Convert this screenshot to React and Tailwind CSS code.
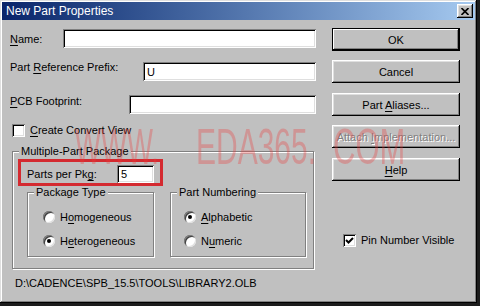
import React from 'react';

const FONT = { fontFamily: '"Liberation Sans", Arial, sans-serif' };

const RAISED = 'shadow-[inset_-1px_-1px_0_#000,inset_1px_1px_0_#fff,inset_-2px_-2px_0_#808080,inset_2px_2px_0_#dfdfdf]';
const SUNKEN = 'shadow-[inset_1px_1px_0_#808080,inset_-1px_-1px_0_#fff,inset_2px_2px_0_#000,inset_-2px_-2px_0_#dfdfdf]';

function U({ children }) {
  return <span className="underline underline-offset-[2px] decoration-1">{children}</span>;
}

function TextBox({ width, height = 19, value = '' }) {
  return (
    <div className={`bg-white ${SUNKEN} flex items-center pl-[4px] text-black`} style={{ width, height }}>
      {value}
    </div>
  );
}

function Button({ children, isDefault = false, disabled = false }) {
  return (
    <div
      className={`w-[128px] h-[23px] flex items-center justify-center bg-[#c0c0c0] ${
        isDefault ? 'border border-black shadow-[inset_-1px_-1px_0_#000,inset_1px_1px_0_#fff,inset_-2px_-2px_0_#808080]' : RAISED
      } ${disabled ? 'text-[#808080] [text-shadow:1px_1px_0_#fff]' : 'text-black'}`}
    >
      <span>{children}</span>
    </div>
  );
}

function CheckBox({ checked = false }) {
  return (
    <div className={`w-[13px] h-[13px] bg-white ${SUNKEN} flex items-center justify-center shrink-0`}>
      {checked && (
        <svg width="9" height="9" viewBox="0 0 9 9">
          <path d="M1 4 L3.5 6.5 L8 2" fill="none" stroke="#000" strokeWidth="2" />
        </svg>
      )}
    </div>
  );
}

function Radio({ checked = false }) {
  return (
    <div className="w-[12px] h-[12px] rounded-full bg-white shadow-[inset_1px_1px_0_#808080,inset_-1px_-1px_0_#dfdfdf,inset_2px_2px_0_#404040] flex items-center justify-center shrink-0">
      {checked && <div className="w-[4px] h-[4px] rounded-full bg-black" />}
    </div>
  );
}

function Group({ label, className = '', children }) {
  return (
    <div className={`relative border border-[#808080] shadow-[inset_1px_1px_0_#fff,1px_1px_0_#fff] ${className}`}>
      <span className="absolute -top-[8px] left-[6px] bg-[#c0c0c0] px-[2px] leading-[14px]">{label}</span>
      {children}
    </div>
  );
}

export default function App() {
  return (
    <div className="w-[480px] h-[306px] bg-[#1c1c1c] relative text-[11px] leading-[14px] text-black" style={FONT}>
      <div className="w-[477px] h-[303px] bg-[#c0c0c0] px-[2px] pt-[2px] shadow-[inset_-1px_-1px_0_#000,inset_1px_1px_0_#dfdfdf,inset_-2px_-2px_0_#808080,inset_2px_2px_0_#fff]">
        {/* Title bar */}
        <div className="h-[18px] flex items-center justify-between pl-[4px] pr-[2px] bg-gradient-to-r from-[#0a246a] to-[#a6caf0]">
          <span className="text-white text-[12px]">New Part Properties</span>
          <div className={`w-[16px] h-[14px] bg-[#c0c0c0] ${RAISED} flex items-center justify-center`}>
            <svg width="8" height="7" viewBox="0 0 8 7">
              <path d="M0.5 0 L7.5 7 M7.5 0 L0.5 7" stroke="#000" strokeWidth="1.6" />
            </svg>
          </div>
        </div>

        <div className="flex">
          {/* Left column */}
          <div className="ml-[8px] w-[306px] flex flex-col">
            <div className="mt-[9px] flex items-center h-[19px]">
              <span><U>N</U>ame:</span>
              <div className="ml-auto"><TextBox width={253} /></div>
            </div>
            <div className="mt-[14px] flex items-start h-[19px]">
              <span className="-mt-[2px]">Part <U>R</U>eference Prefix:</span>
              <div className="ml-auto"><TextBox width={173} value="U" /></div>
            </div>
            <div className="mt-[14px] flex items-start h-[19px]">
              <span className="-mt-[1px]"><U>P</U>CB Footprint:</span>
              <div className="ml-auto"><TextBox width={187} /></div>
            </div>
            <div className="mt-[9px] ml-[2px] flex items-center gap-[5px]">
              <CheckBox />
              <span><U>C</U>reate Convert View</span>
            </div>

            <Group label="Multiple-Part Package" className="mt-[14px] ml-[2px] w-[302px] h-[118px]">
              <div className="mt-[13px] ml-[14px] flex items-center">
                <span className="w-[90px]">Parts per Pk<U>g</U>:</span>
                <TextBox width={37} height={18} value="5" />
              </div>
              <div className="mt-[9px] ml-[14px] flex gap-[16px]">
                <Group label="Package Type" className="w-[127px] h-[65px]">
                  <div className="mt-[17px] ml-[15px] flex items-center gap-[5px]">
                    <Radio />
                    <span>H<U>o</U>mogeneous</span>
                  </div>
                  <div className="mt-[10px] ml-[15px] flex items-center gap-[5px]">
                    <Radio checked />
                    <span>H<U>e</U>terogeneous</span>
                  </div>
                </Group>
                <Group label="Part Numbering" className="w-[136px] h-[65px]">
                  <div className="mt-[17px] ml-[13px] flex items-center gap-[5px]">
                    <Radio checked />
                    <span><U>A</U>lphabetic</span>
                  </div>
                  <div className="mt-[10px] ml-[13px] flex items-center gap-[5px]">
                    <Radio />
                    <span>N<U>u</U>meric</span>
                  </div>
                </Group>
              </div>
            </Group>

            <div className="mt-[7px] ml-[5px]">D:\CADENCE\SPB_15.5\TOOLS\LIBRARY2.OLB</div>
          </div>

          {/* Right column */}
          <div className="ml-[16px] flex flex-col">
            <div className="mt-[8px]"><Button isDefault>OK</Button></div>
            <div className="mt-[9px]"><Button>Cancel</Button></div>
            <div className="mt-[10px]"><Button>Part <U>A</U>liases...</Button></div>
            <div className="mt-[9px]"><Button disabled>Attach <U>I</U>mplementation...</Button></div>
            <div className="mt-[10px]"><Button><U>H</U>elp</Button></div>
            <div className="mt-[52px] ml-[11px] flex items-center gap-[5px]">
              <CheckBox checked />
              <span>Pin Number Visible</span>
            </div>
          </div>
        </div>
      </div>

      {/* Annotation and watermark overlays */}
      <div className="absolute left-[18px] top-[159px] w-[145px] h-[27px] border-[3px] border-[#d42a30]" />
      <div className="absolute left-0 top-[121px] w-[480px] h-[52px] pointer-events-none text-[rgba(235,60,60,0.32)] text-[50px] leading-[52px]">
        <span className="absolute left-[75px] origin-left scale-x-[0.55]">WWW.</span>
        <span className="absolute left-[196px] origin-left scale-x-[0.6]">EDA365.</span>
        <span className="absolute left-[333px] origin-left scale-x-[0.62]">COM</span>
      </div>
    </div>
  );
}
